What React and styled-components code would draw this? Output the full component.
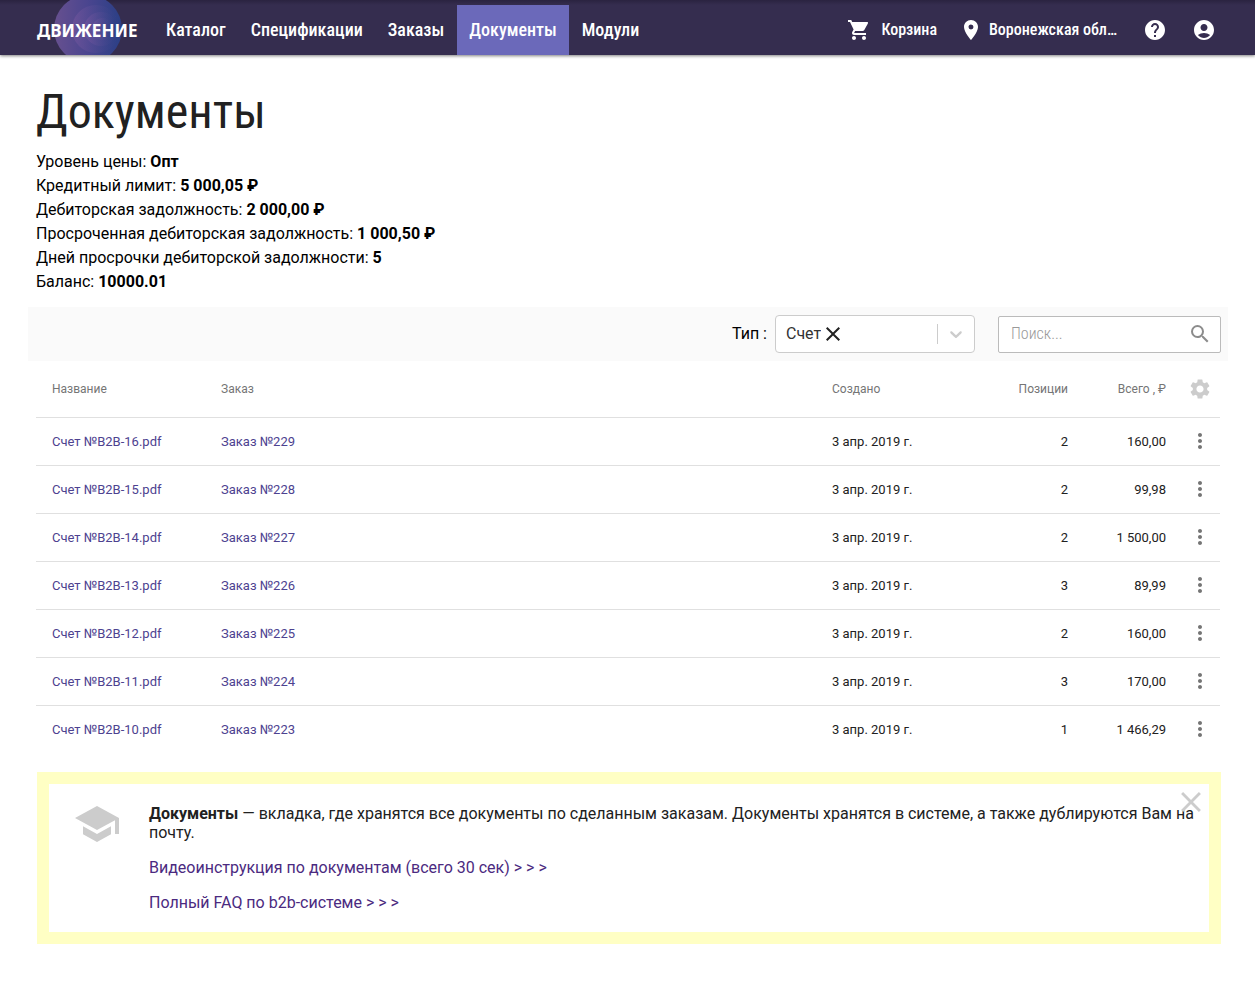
import { useState } from 'react';
import styled, { createGlobalStyle } from 'styled-components';
import {
  MdShoppingCart,
  MdPlace,
  MdHelp,
  MdAccountCircle,
  MdSearch,
  MdSettings,
  MdMoreVert,
  MdSchool,
  MdClose,
} from 'react-icons/md';

const condensed = '"Roboto Condensed", Roboto, "Liberation Sans", sans-serif';

const GlobalStyle = createGlobalStyle`
  * {
    box-sizing: border-box;
  }
  body {
    margin: 0;
    background: #fff;
    color: #000;
    font-family: Roboto, "Liberation Sans", sans-serif;
    font-size: 16px;
    line-height: 24px;
  }
  a {
    text-decoration: none;
  }
  button, input, select {
    font: inherit;
    color: inherit;
    border: none;
    background: none;
    padding: 0;
    margin: 0;
    outline: none;
  }
  button {
    cursor: pointer;
  }
  svg {
    display: block;
    flex: none;
  }
`;

const Header = styled.header`
  display: flex;
  justify-content: space-between;
  height: 55px;
  padding: 0 39px 0 36px;
  background: linear-gradient(#2a2340, #352d4f 5px);
  box-shadow: 0 1px 3px rgba(0, 0, 0, 0.5);
  color: #fff;
  font-family: ${condensed};
`;

const HeaderSide = styled.div`
  display: flex;
`;

const Logo = styled.a`
  position: relative;
  display: flex;
  align-items: center;
  width: 118px;
  padding: 6px 0 0 1px;
  overflow: hidden;
  color: #fff;
  font-family: "Noto Sans", "Open Sans", sans-serif;
  font-size: 17px;
  font-weight: 700;
`;

const LogoCircle = styled.svg`
  position: absolute;
  left: 17px;
  top: -6px;
`;

const LogoText = styled.span`
  position: relative;
`;

const Nav = styled.nav`
  display: flex;
  gap: 1px;
  padding-top: 5px;
`;

const NavLink = styled.a`
  display: flex;
  align-items: center;
  padding: 0 12px;
  background: ${(props) => (props.$active ? '#6b69ba' : 'transparent')};
  color: #fff;
  font-size: 18px;
  font-weight: 500;
`;

const HeaderButton = styled.button`
  display: flex;
  align-items: center;
  gap: ${(props) => props.$gap || 8}px;
  padding-top: 5px;
  margin-left: ${(props) => props.$space || 24}px;
  font-weight: 500;
`;

const Region = styled.span`
  max-width: 130px;
  overflow: hidden;
  white-space: nowrap;
  text-overflow: ellipsis;
`;

const Main = styled.main`
  padding: 29px 35px 40px 36px;
`;

const Title = styled.h1`
  margin: 0 0 10px;
  color: #212121;
  font-family: ${condensed};
  font-size: 48px;
  font-weight: 400;
  line-height: 56px;
`;

const Stats = styled.ul`
  margin: 0 0 13px;
  padding: 0;
  list-style: none;
`;

const FilterBar = styled.form`
  display: flex;
  justify-content: flex-end;
  align-items: center;
  height: 54px;
  margin: 0 -8px;
  padding: 0 7px;
  background: #fafafa;
`;

const FilterLabel = styled.label`
  margin-right: 8px;
`;

const SelectBox = styled.div`
  display: flex;
  align-items: center;
  width: 200px;
  height: 38px;
  margin-right: 23px;
  padding-left: 10px;
  border: 1px solid #ccc;
  border-radius: 4px;
  background: #fff;
`;

const TypeSelect = styled.select`
  appearance: none;
  field-sizing: content;
  color: #333;
`;

const ClearButton = styled.button`
  color: #222;
`;

const Arrow = styled.label`
  display: flex;
  margin-left: auto;
  padding: 0 8px;
  border-left: 1px solid #ccc;
  color: #ccc;
`;

const SearchBox = styled.div`
  display: flex;
  align-items: center;
  width: 223px;
  height: 37px;
  padding: 0 8px 0 12px;
  border: 1px solid #bbb;
  border-radius: 2px;
  background: #fff;
  color: #8c8c8c;
`;

const SearchInput = styled.input`
  flex: 1;
  min-width: 0;
  font-family: ${condensed};
  font-weight: 300;

  &::placeholder {
    color: #999;
    opacity: 1;
  }
`;

const Table = styled.table`
  width: 100%;
  table-layout: fixed;
  border-collapse: collapse;
  color: #212121;
  font-size: 13px;
`;

const HeadCell = styled.th`
  width: ${(props) => (props.$width ? `${props.$width}px` : 'auto')};
  height: 56px;
  padding: 0 16px;
  border-bottom: 1px solid #e0e0e0;
  color: #757575;
  font-size: 12px;
  font-weight: 400;
  text-align: ${(props) => (props.$right ? 'right' : 'left')};
`;

const Row = styled.tr`
  & + & {
    border-top: 1px solid #e0e0e0;
  }
`;

const Cell = styled.td`
  height: 48px;
  padding: ${(props) => (props.$icon ? 0 : '1px')} 16px 0;
  text-align: ${(props) => (props.$right ? 'right' : 'left')};
`;

const DocLink = styled.a`
  color: #4d4290;
`;

const IconButton = styled.button`
  display: flex;
  margin-left: -10px;
  color: ${(props) => (props.$light ? '#ccc' : '#757575')};
`;

const Notice = styled.aside`
  position: relative;
  display: flex;
  gap: 28px;
  margin: 19px -1px 0 1px;
  padding: 16px 12px 20px 24px;
  border: 12px solid #ffffc4;
  color: #212121;
  line-height: 19px;
`;

const NoticeIcon = styled(MdSchool)`
  color: #ccc;
`;

const NoticeText = styled.div`
  padding-top: 4px;
`;

const Paragraph = styled.p`
  margin: 0;

  & + & {
    margin-top: 16px;
  }
`;

const NoticeLink = styled.a`
  color: #4b2a80;
`;

const NoticeClose = styled.button`
  position: absolute;
  top: 1px;
  right: 1px;
  color: #ccc;
`;

const menu = ['Каталог', 'Спецификации', 'Заказы', 'Документы', 'Модули'];

const stats = [
  ['Уровень цены', 'Опт'],
  ['Кредитный лимит', '5 000,05 ₽'],
  ['Дебиторская задолжность', '2 000,00 ₽'],
  ['Просроченная дебиторская задолжность', '1 000,50 ₽'],
  ['Дней просрочки дебиторской задолжности', '5'],
  ['Баланс', '10000.01'],
];

const documents = [
  { id: 16, order: 229, count: 2, total: '160,00' },
  { id: 15, order: 228, count: 2, total: '99,98' },
  { id: 14, order: 227, count: 2, total: '1 500,00' },
  { id: 13, order: 226, count: 3, total: '89,99' },
  { id: 12, order: 225, count: 2, total: '160,00' },
  { id: 11, order: 224, count: 3, total: '170,00' },
  { id: 10, order: 223, count: 1, total: '1 466,29' },
];

function App() {
  const [search, setSearch] = useState('');
  const [noticeOpen, setNoticeOpen] = useState(true);

  return (
    <>
      <GlobalStyle />
      <Header>
        <HeaderSide>
          <Logo href="#">
            <LogoCircle width="70" height="70" viewBox="0 0 70 70">
              <defs>
                <linearGradient id="disc" x1="0" y1="0" x2="1" y2="0">
                  <stop offset="0" stopColor="#67508f" />
                  <stop offset="0.5" stopColor="#4a458f" />
                  <stop offset="1" stopColor="#2a3f85" />
                </linearGradient>
                <linearGradient id="ring" x1="0" y1="0" x2="1" y2="0">
                  <stop offset="0" stopColor="#7a58a0" stopOpacity="0.55" />
                  <stop offset="1" stopColor="#2a3f85" stopOpacity="0.3" />
                </linearGradient>
              </defs>
              <circle cx="35" cy="35" r="34" fill="url(#disc)" />
              <circle cx="43" cy="35" r="24" fill="url(#ring)" />
              <circle cx="48" cy="35" r="17" fill="url(#ring)" />
              <circle cx="50" cy="35" r="11" fill="url(#ring)" />
            </LogoCircle>
            <LogoText>ДВИЖЕНИЕ</LogoText>
          </Logo>
          <Nav>
            {menu.map((item) => (
              <NavLink key={item} href="#" $active={item === 'Документы'}>
                {item}
              </NavLink>
            ))}
          </Nav>
        </HeaderSide>
        <HeaderSide>
          <HeaderButton $gap={10}>
            <MdShoppingCart size={24} />
            Корзина
          </HeaderButton>
          <HeaderButton $space={22} $gap={6}>
            <MdPlace size={24} />
            <Region>Воронежская область</Region>
          </HeaderButton>
          <HeaderButton aria-label="Помощь">
            <MdHelp size={24} />
          </HeaderButton>
          <HeaderButton aria-label="Профиль" $space={25}>
            <MdAccountCircle size={24} />
          </HeaderButton>
        </HeaderSide>
      </Header>
      <Main>
        <Title>Документы</Title>
        <Stats>
          {stats.map(([name, value]) => (
            <li key={name}>
              {name}: <b>{value}</b>
            </li>
          ))}
        </Stats>
        <FilterBar>
          <FilterLabel htmlFor="type">Тип :</FilterLabel>
          <SelectBox>
            <TypeSelect id="type">
              <option>Счет</option>
            </TypeSelect>
            <ClearButton type="button" aria-label="Очистить">
              <MdClose size={24} />
            </ClearButton>
            <Arrow htmlFor="type">
              <svg width="20" height="20" viewBox="0 0 20 20" fill="currentColor">
                <path d="M4.516 7.548c0.436-0.446 1.043-0.481 1.576 0l3.908 3.747 3.908-3.747c0.533-0.481 1.141-0.446 1.574 0 0.436 0.445 0.408 1.197 0 1.615-0.406 0.418-4.695 4.502-4.695 4.502-0.217 0.223-0.502 0.335-0.787 0.335s-0.57-0.112-0.789-0.335c0 0-4.287-4.084-4.695-4.502s-0.436-1.17 0-1.615z" />
              </svg>
            </Arrow>
          </SelectBox>
          <SearchBox>
            <SearchInput
              aria-label="Поиск"
              placeholder="Поиск..."
              value={search}
              onChange={(event) => setSearch(event.target.value)}
            />
            <MdSearch size={24} />
          </SearchBox>
        </FilterBar>
        <Table>
          <thead>
            <tr>
              <HeadCell $width={169}>Название</HeadCell>
              <HeadCell>Заказ</HeadCell>
              <HeadCell $width={168}>Создано</HeadCell>
              <HeadCell $width={100} $right>Позиции</HeadCell>
              <HeadCell $width={98} $right>Всего , ₽</HeadCell>
              <HeadCell $width={38}>
                <IconButton aria-label="Настройки" $light>
                  <MdSettings size={24} />
                </IconButton>
              </HeadCell>
            </tr>
          </thead>
          <tbody>
            {documents.map((doc) => (
              <Row key={doc.id}>
                <Cell>
                  <DocLink href="#">Счет №B2B-{doc.id}.pdf</DocLink>
                </Cell>
                <Cell>
                  <DocLink href="#">Заказ №{doc.order}</DocLink>
                </Cell>
                <Cell>3 апр. 2019 г.</Cell>
                <Cell $right>{doc.count}</Cell>
                <Cell $right>{doc.total}</Cell>
                <Cell $icon>
                  <IconButton aria-label="Действия">
                    <MdMoreVert size={24} />
                  </IconButton>
                </Cell>
              </Row>
            ))}
          </tbody>
        </Table>
        {noticeOpen && (
          <Notice>
            <NoticeIcon size={48} />
            <NoticeText>
              <Paragraph>
                <b>Документы</b> — вкладка, где хранятся все документы по сделанным заказам.
                Документы хранятся в системе, а также дублируются Вам на почту.
              </Paragraph>
              <Paragraph>
                <NoticeLink href="#">
                  Видеоинструкция по документам (всего 30 сек) &gt; &gt; &gt;
                </NoticeLink>
              </Paragraph>
              <Paragraph>
                <NoticeLink href="#">Полный FAQ по b2b-системе &gt; &gt; &gt;</NoticeLink>
              </Paragraph>
            </NoticeText>
            <NoticeClose aria-label="Закрыть" onClick={() => setNoticeOpen(false)}>
              <MdClose size={34} />
            </NoticeClose>
          </Notice>
        )}
      </Main>
    </>
  );
}

export default App;
